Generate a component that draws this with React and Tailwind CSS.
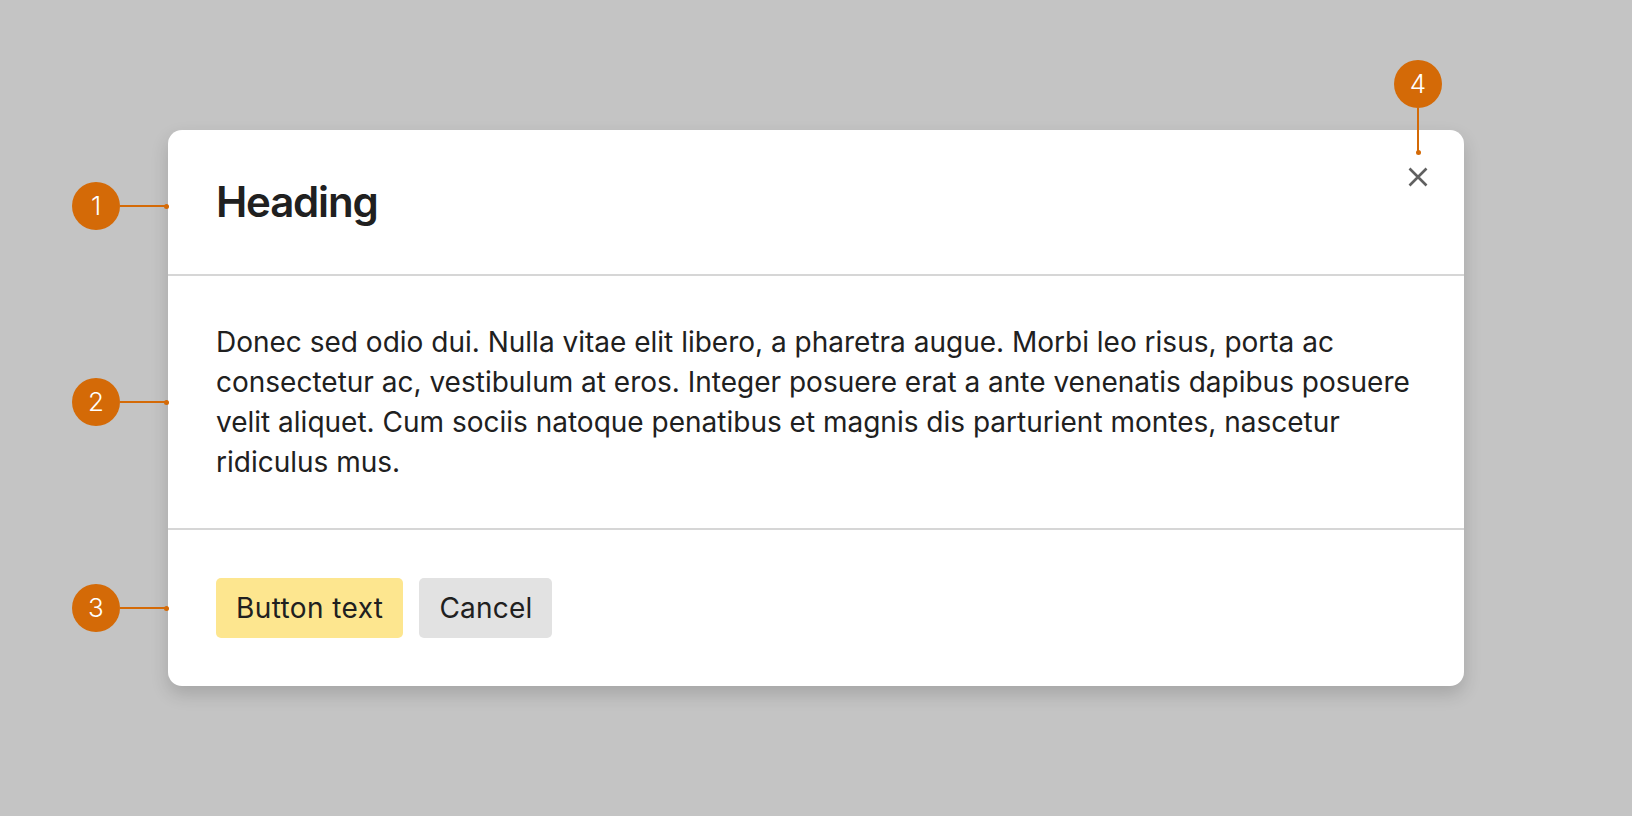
import React from "react";

function Marker({ n, className }) {
  return (
    <div className={"absolute flex items-center " + className}>
      <div className="w-[48px] h-[48px] rounded-full bg-[#d46a07] text-white flex items-center justify-center text-[26px] leading-none font-light">
        {n}
      </div>
      <div className="w-[46px] h-[2px] bg-[#d46a07]" />
      <div className="w-[5px] h-[5px] rounded-full bg-[#d46a07] -ml-[2px]" />
    </div>
  );
}

export default function App() {
  return (
    <div
      className="w-[1632px] h-[816px] bg-[#c4c4c4] pt-[130px] pl-[168px] overflow-hidden"
      style={{ fontFamily: "Inter, 'Noto Sans', sans-serif" }}
    >
      <div className="relative w-[1296px] bg-white rounded-[14px] shadow-[0_8px_18px_rgba(0,0,0,0.16)] text-[#202020]">
        <div className="px-12 py-12 border-b-2 border-[#d6d6d6]">
          <h1 className="text-[42px] leading-[48px] font-semibold tracking-[-1.2px]">Heading</h1>
        </div>
        <div className="px-12 py-[46px] border-b-2 border-[#d6d6d6]">
          <p className="text-[28px] leading-[40px]">
            Donec sed odio dui. Nulla vitae elit libero, a pharetra augue. Morbi leo risus, porta ac consectetur ac, vestibulum at eros. Integer posuere erat a ante venenatis dapibus posuere velit aliquet. Cum sociis natoque penatibus et magnis dis parturient montes, nascetur ridiculus mus.
          </p>
        </div>
        <div className="px-12 py-12 flex gap-4">
          <button className="h-[60px] px-5 rounded-[5px] bg-[#fde68f] text-[28px] tracking-[0.4px] text-[#202020]">Button text</button>
          <button className="h-[60px] px-5 rounded-[5px] bg-[#e2e2e2] text-[28px] tracking-[0.2px] text-[#202020]">Cancel</button>
        </div>

        <button className="absolute left-[1240px] top-[37px] w-[20px] h-[20px] text-[#606060]" aria-label="Close">
          <svg viewBox="0 0 20 20" width="20" height="20" fill="none" stroke="currentColor" strokeWidth="2.6" strokeLinecap="butt">
            <path d="M1.5 1.5 L18.5 18.5 M18.5 1.5 L1.5 18.5" />
          </svg>
        </button>

        <Marker n="1" className="left-[-96px] top-[52px]" />
        <Marker n="2" className="left-[-96px] top-[248px]" />
        <Marker n="3" className="left-[-96px] top-[454px]" />
        <div className="absolute left-[1226px] top-[-70px] flex flex-col items-center">
          <div className="w-[48px] h-[48px] rounded-full bg-[#d46a07] text-white flex items-center justify-center text-[26px] leading-none font-light">
            4
          </div>
          <div className="w-[2px] h-[44px] bg-[#d46a07]" />
          <div className="w-[5px] h-[5px] rounded-full bg-[#d46a07] -mt-[2px]" />
        </div>
      </div>
    </div>
  );
}
